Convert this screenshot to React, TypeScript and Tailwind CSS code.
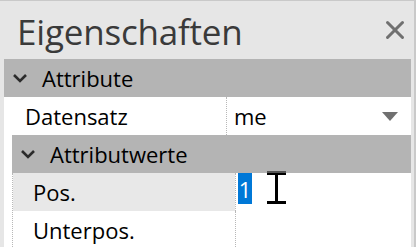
import { X } from 'lucide-react';

function Chevron() {
  return (
    <svg width="16" height="10" viewBox="0 0 16 10" className="shrink-0">
      <path d="M2 2l6 6 6-6" fill="none" stroke="#2b2b2b" strokeWidth="2.6" />
    </svg>
  );
}

function SectionBar({ label }: { label: string }) {
  return (
    <div className="flex h-[38px] items-center bg-[#b4b4b4] pl-2">
      <Chevron />
      <span className="ml-[14px] text-[22px] leading-none text-black">{label}</span>
    </div>
  );
}

export default function App() {
  return (
    <div className="flex h-[247px] w-[416px] flex-col overflow-hidden border-t border-r-2 border-[#c9c9c9] bg-[#e6e6e6] font-['Open_Sans',sans-serif]">
      {/* Panel header */}
      <div className="flex h-[58px] shrink-0 items-center justify-between pl-[17px] pr-[4px]">
        <h1 className="pt-[2px] text-[35px] leading-none tracking-[-0.2px] text-[#3a3a3a]">
          Eigenschaften
        </h1>
        <X size={30} strokeWidth={2.4} className="text-[#707070]" />
      </div>

      {/* Property grid */}
      <div className="ml-1 mr-[3px] flex-1 bg-white">
        <SectionBar label="Attribute" />

        <div className="flex h-[38px] items-center">
          <div className="w-[222px] pl-[21px] text-[22px] text-black">Datensatz</div>
          <div className="flex h-full flex-1 items-center justify-between border-l border-dotted border-[#b8b8b8] pl-[7px] pr-[13px]">
            <span className="text-[22px] text-black">me</span>
            <svg width="16" height="9" viewBox="0 0 16 9">
              <path d="M0 0h16L8 9z" fill="#707070" />
            </svg>
          </div>
        </div>

        <div className="ml-2">
          <SectionBar label="Attributwerte" />
          <div className="border-l border-dotted border-[#b8b8b8]">
            <div className="flex h-[38px]">
              <div className="flex w-[222px] items-center bg-[#e8e8e8] pl-[20px] text-[22px] text-black">
                Pos.
              </div>
              <div className="relative flex flex-1 items-start border-l border-dotted border-[#b8b8b8] pl-[2px]">
                <span className="flex h-[31px] w-[14px] items-center justify-center bg-[#0078d7] text-[22px] leading-none text-white">
                  1
                </span>
                {/* mouse cursor */}
                <svg
                  width="19"
                  height="33"
                  viewBox="0 0 19 33"
                  className="absolute left-[31px] top-[-2px]"
                >
                  <rect x="0" y="0" width="19" height="2" fill="#555" />
                  <rect x="0" y="2" width="19" height="2" fill="#000" />
                  <rect x="8" y="2" width="3" height="29" fill="#000" />
                  <rect x="0" y="30" width="19" height="3" fill="#000" />
                </svg>
              </div>
            </div>
            <div className="flex h-[38px]">
              <div className="flex w-[222px] items-center pl-[20px] text-[22px] text-black">
                Unterpos.
              </div>
              <div className="flex-1 border-l border-dotted border-[#b8b8b8]" />
            </div>
          </div>
        </div>
      </div>
    </div>
  );
}
